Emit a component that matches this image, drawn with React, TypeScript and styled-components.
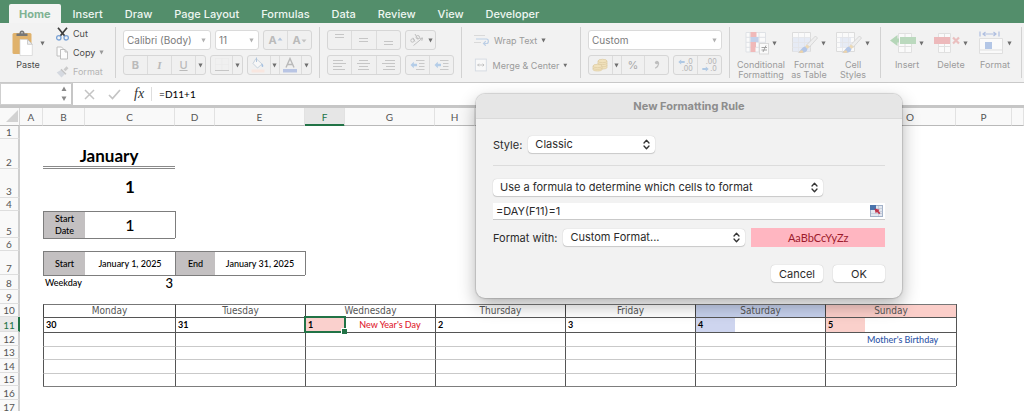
import React from "react";
import styled, { createGlobalStyle } from "styled-components";

const UI = `Inter, "Liberation Sans", sans-serif`;
const SHEET = `Lato, "Liberation Sans", sans-serif`;
const INK = "#4a4a4a";
const SOFT = "#a9a9a9";
const ACCENT = "#217346";

const GlobalStyle = createGlobalStyle`
  * { box-sizing: border-box; }
  body { margin: 0; background: #fff; font-family: ${UI}; }
  button, input, select { font: inherit; color: inherit; margin: 0; }
`;

const Shell = styled.div`
  position: relative;
  display: flex;
  flex-direction: column;
  height: 100vh;
  overflow: hidden;
`;

/* ---------- tabs ---------- */
const TabBar = styled.nav`
  display: flex;
  align-items: flex-end;
  gap: 2px;
  height: 23px;
  flex: none;
  padding-left: 9px;
  background: #538e6b;
`;

const Tab = styled.button<{ $active?: boolean }>`
  height: 19px;
  padding: 0 10px;
  border: 0;
  border-radius: 2px 2px 0 0;
  background: ${(p) => (p.$active ? "#f4f4f4" : "transparent")};
  color: ${(p) => (p.$active ? "#7fb293" : "#eef6f1")};
  font-size: 11px;
  font-weight: ${(p) => (p.$active ? 700 : 500)};
  line-height: 16px;
  white-space: nowrap;
`;

/* ---------- ribbon ---------- */
const Ribbon = styled.div`
  display: flex;
  flex: none;
  height: 60px;
  background: #f2f2f2;
  border-bottom: 1px solid #c9c9c9;
`;

const Group = styled.section<{ $pad?: number }>`
  display: flex;
  flex: none;
  margin: 4px 0;
  padding: 0 ${(p) => p.$pad ?? 7}px;
  border-right: 1px solid #d2d2d2;
`;

const Rows = styled.div<{ $width?: number }>`
  display: flex;
  flex-direction: column;
  gap: 5px;
  padding-top: 3px;
  width: ${(p) => (p.$width ? `${p.$width}px` : "auto")};
`;

const Line = styled.div`
  display: flex;
  gap: 4px;
  height: 20px;
`;

const Combo = styled.label<{ $width: number }>`
  display: grid;
  align-items: center;
  width: ${(p) => p.$width}px;
  height: 20px;
  border: 1px solid #dadada;
  border-radius: 3px;
  background: #fff;
  color: #7b7b7b;
  font-size: 10px;

  > * { grid-area: 1 / 1; }
  > svg { justify-self: end; margin-right: 4px; pointer-events: none; }
  > select {
    appearance: none;
    width: 100%;
    height: 18px;
    padding: 0 0 0 3px;
    border: 0;
    background: transparent;
    outline: none;
  }
`;

const ButtonSet = styled.div<{ $width: number }>`
  display: flex;
  width: ${(p) => p.$width}px;
  height: 20px;
  border: 1px solid #d6d6d6;
  border-radius: 3px;
  background: #f0f0f0;
`;

const ToolButton = styled.button<{ $narrow?: boolean; $last?: boolean }>`
  display: flex;
  align-items: center;
  justify-content: center;
  flex: ${(p) => (p.$narrow ? "0 0 9px" : "1 1 0")};
  min-width: 0;
  padding: 0;
  border: 0;
  border-right: ${(p) => (p.$last ? "0" : "1px solid #dcdcdc")};
  background: transparent;
  color: ${SOFT};
  font-size: 11px;
  line-height: 12px;
`;

const SmallButton = styled.button<{ $color?: string; $height?: number }>`
  display: flex;
  align-items: center;
  gap: 4px;
  height: ${(p) => p.$height ?? 20}px;
  padding: 0;
  border: 0;
  background: transparent;
  color: ${(p) => p.$color ?? INK};
  font-size: 9px;
  white-space: nowrap;
`;

const BigButton = styled.button<{ $width: number; $color?: string }>`
  display: flex;
  flex-direction: column;
  align-items: center;
  width: ${(p) => p.$width}px;
  padding: 4px 0 0;
  border: 0;
  background: transparent;
  color: ${(p) => p.$color ?? "#9b9b9b"};
  font-size: 9px;
  line-height: 10px;
  white-space: nowrap;
`;

const IconRow = styled.span<{ $gap?: number }>`
  display: flex;
  align-items: center;
  gap: ${(p) => p.$gap ?? 3}px;
  height: 24px;
  margin-bottom: 5px;
`;

const ClipboardColumn = styled.div`
  display: flex;
  flex-direction: column;
  gap: 6px;
  width: 59px;
`;

const FontGlyph = styled.span<{ $serif?: boolean; $italic?: boolean; $underline?: boolean }>`
  font-family: ${(p) => (p.$serif ? `"Liberation Serif", serif` : UI)};
  font-style: ${(p) => (p.$italic ? "italic" : "normal")};
  font-weight: ${(p) => (p.$underline ? 500 : 700)};
  text-decoration: ${(p) => (p.$underline ? "underline" : "none")};
  color: #bababa;
`;

/* ---------- formula bar ---------- */
const FormulaBar = styled.div`
  display: flex;
  flex: none;
  height: 25px;
  background: #fff;
  border-bottom: 3px solid #c6c6c6;
`;

const NameBox = styled.label`
  display: flex;
  align-items: center;
  width: 73px;
  padding-right: 4px;
  border: 1px solid #cfcfcf;
  border-right: 2px solid #c6c6c6;

  > input { flex: 1; min-width: 0; border: 0; outline: none; background: transparent; font-size: 10px; }
`;

const FormulaTools = styled.div`
  display: flex;
  align-items: center;
  gap: 13px;
  margin: 4px 0;
  padding: 0 7px 0 11px;
  border-right: 1px solid #dedede;
`;

const PlainButton = styled.button`
  display: flex;
  align-items: center;
  padding: 0;
  border: 0;
  background: transparent;
  color: #333;
  font-family: "Liberation Serif", serif;
  font-size: 14px;
  font-style: italic;
  line-height: 14px;
`;

const FormulaInput = styled.input`
  flex: 1;
  min-width: 0;
  padding: 0 7px;
  border: 0;
  outline: none;
  background: transparent;
  && { color: #000; font-family: ${SHEET}; font-size: 10px; }
`;

/* ---------- sheet ---------- */
const SheetArea = styled.main`
  flex: 1;
  min-height: 0;
  overflow: hidden;
`;

const Grid = styled.table`
  width: 100%;
  table-layout: fixed;
  border-collapse: separate;
  border-spacing: 0;
  font-family: ${SHEET};
  font-size: 10px;
  line-height: 12px;
`;

const Col = styled.col<{ $w?: number }>`
  width: ${(p) => (p.$w ? `${p.$w}px` : "auto")};
`;

const GridRow = styled.tr<{ $h: number }>`
  height: ${(p) => p.$h}px;
`;

const ColHead = styled.th<{ $active?: boolean }>`
  padding: 0;
  border-right: 1px solid #e2e2e2;
  border-bottom: 1px solid ${(p) => (p.$active ? ACCENT : "#b9b9b9")};
  box-shadow: ${(p) => (p.$active ? `inset 0 -1px ${ACCENT}` : "none")};
  background: ${(p) => (p.$active ? "#e6e6e6" : "#f9f9f9")};
  color: ${(p) => (p.$active ? ACCENT : "#555")};
  font-weight: 400;
`;

const Corner = styled.th`
  padding: 0 0 2px;
  border-right: 1px solid #d5d5d5;
  border-bottom: 1px solid #b9b9b9;
  background: #f9f9f9;
  text-align: right;
  vertical-align: bottom;
  line-height: 0;
`;

const RowHead = styled.th<{ $active?: boolean }>`
  padding: 0;
  border-right: 2px solid ${(p) => (p.$active ? ACCENT : "#cfcfcf")};
  border-bottom: 1px solid #dedede;
  background: ${(p) => (p.$active ? "#e9e9e9" : "#f9f9f9")};
  color: ${(p) => (p.$active ? ACCENT : "#555")};
  font-weight: 400;
  text-align: center;
  vertical-align: bottom;
`;

type CellProps = {
  $left?: string;
  $top?: string;
  $fill?: string;
  $color?: string;
  $align?: "left" | "center" | "right";
  $valign?: "top" | "middle" | "bottom";
  $size?: number;
  $bold?: boolean;
};

const Cell = styled.td<CellProps>`
  padding: 0 2px;
  border-left: ${(p) => (p.$left ? `1px solid ${p.$left}` : "0")};
  border-top: ${(p) => (p.$top ? `1px solid ${p.$top}` : "0")};
  background: ${(p) => p.$fill ?? "transparent"};
  color: ${(p) => p.$color ?? "#000"};
  font-size: ${(p) => p.$size ?? 9}px;
  font-weight: ${(p) => (p.$bold ? 700 : 500)};
  text-align: ${(p) => p.$align ?? "left"};
  vertical-align: ${(p) => p.$valign ?? "middle"};
  white-space: nowrap;
`;

const MonthCell = styled(Cell)`
  border-bottom: 3px double #8a8a8a;
  line-height: 20px;
`;

const NumberCell = styled(Cell)`
  line-height: 22px;
`;

const DayHead = styled.th<{ $fill?: string }>`
  padding: 0;
  border-left: 1px solid #444;
  border-top: 1px solid #777;
  background: ${(p) => p.$fill ?? "transparent"};
  color: #555;
  font-family: "DejaVu Sans Condensed", "DejaVu Sans", sans-serif;
  font-size: 10px;
  font-weight: 400;
`;

const SelectedCell = styled(Cell)`
  position: relative;

  &::after {
    content: "";
    position: absolute;
    inset: -2px -1px -1px -2px;
    border: 2px solid ${ACCENT};
  }
  &::before {
    content: "";
    position: absolute;
    right: -2px;
    bottom: -2px;
    z-index: 1;
    width: 5px;
    height: 5px;
    border-left: 1px solid #fff;
    border-top: 1px solid #fff;
    background: ${ACCENT};
  }
`;

/* ---------- dialog ---------- */
const Dialog = styled.section`
  position: absolute;
  left: 476px;
  top: 94px;
  width: 426px;
  border-radius: 9px;
  background: #f2f2f2;
  box-shadow: 0 0 1px 1px rgba(0, 0, 0, 0.14), 0 7px 18px rgba(0, 0, 0, 0.3);
  color: #2b2b2b;
  font-size: 11px;
`;

const DialogTitle = styled.h1`
  margin: 0;
  height: 25px;
  border-bottom: 1px solid #dadada;
  border-radius: 9px 9px 0 0;
  background: #e6e6e6;
  color: #8d8d8d;
  font-size: 11px;
  font-weight: 700;
  line-height: 24px;
  text-align: center;
`;

const DialogBody = styled.form`
  display: flex;
  flex-direction: column;
  padding: 17px 17px 16px;
`;

const Field = styled.div`
  display: flex;
  align-items: center;
  gap: 6px;
`;

const FieldLabel = styled.label`
  white-space: nowrap;
`;

const Divider = styled.hr`
  width: 100%;
  margin: 12px 0 13px;
  border: 0;
  border-top: 1px solid #dcdcdc;
`;

const Popup = styled.span<{ $width: number }>`
  display: grid;
  align-items: center;
  width: ${(p) => p.$width}px;
  height: 17px;
  border-radius: 4px;
  background: #fff;
  box-shadow: 0 0 1px rgba(0, 0, 0, 0.25), 0 1px 1px rgba(0, 0, 0, 0.15);

  > * { grid-area: 1 / 1; }
  > svg { justify-self: end; margin-right: 5px; pointer-events: none; }
  > select {
    appearance: none;
    width: 100%;
    height: 17px;
    padding: 0 0 1px 7px;
    border: 0;
    background: transparent;
    outline: none;
  }
`;

const RangeBox = styled.div`
  display: flex;
  align-items: center;
  height: 17px;
  margin: 7px 0 8px;
  padding: 0 2px 0 3px;
  background: #fff;
  border-bottom: 1px solid #c9c9c9;

  > input { flex: 1; min-width: 0; padding: 0; border: 0; outline: none; background: transparent; }
`;

const Sample = styled.output`
  flex: 1;
  height: 19px;
  background: #ffb6c1;
  color: #9c1a2c;
  font-family: ${SHEET};
  font-size: 11px;
  line-height: 19px;
  text-align: center;
`;

const Actions = styled.div`
  display: flex;
  justify-content: flex-end;
  gap: 10px;
  margin-top: 18px;
`;

const PushButton = styled.button`
  width: 52px;
  height: 17px;
  padding: 0;
  border: 0;
  border-radius: 4px;
  background: #fff;
  box-shadow: 0 0 1px rgba(0, 0, 0, 0.25), 0 1px 1px rgba(0, 0, 0, 0.15);
  line-height: 16px;
`;

/* ---------- drawings ---------- */
const Caret = ({ color = "#6f6f6f" }: { color?: string }) => (
  <svg width="5" height="5" viewBox="0 0 5 5" aria-hidden="true">
    <path d="M0.4 0.6h4.2L2.5 4.4z" fill={color} />
  </svg>
);

const Chevrons = () => (
  <svg width="7" height="11" viewBox="0 0 7 11" fill="none" stroke="#333" strokeWidth="1.3" strokeLinecap="round" strokeLinejoin="round" aria-hidden="true">
    <path d="M1 4l2.5-2.8L6 4M1 7l2.5 2.8L6 7" />
  </svg>
);

const PasteIcon = () => (
  <svg width="21" height="26" viewBox="0 0 21 26" aria-hidden="true">
    <rect x="0.5" y="3" width="19" height="21" rx="1.5" fill="#e0b26c" />
    <path d="M4.5 6V3.4h3C7.5 1.4 8.5 0.5 10 0.5s2.5 0.9 2.5 2.9h3V6z" fill="#777" />
    <circle cx="10" cy="2.7" r="0.8" fill="#ddd" />
    <path d="M8 9.5h7.5l4.8 4.8V25.5H8z" fill="#fff" stroke="#d2d2d2" strokeWidth="0.7" />
    <path d="M15.5 9.5v4.8h4.8z" fill="#eee" stroke="#bbb" strokeWidth="0.7" />
  </svg>
);

const CutIcon = () => (
  <svg width="13" height="14" viewBox="0 0 13 14" fill="none" aria-hidden="true">
    <path d="M2 0.7L8.8 9M11 0.7L4.2 9" stroke="#3d3d3d" strokeWidth="1.7" />
    <circle cx="2.8" cy="10.8" r="2.2" stroke="#7ba3d6" strokeWidth="1.3" />
    <circle cx="10.2" cy="10.8" r="2.2" stroke="#7ba3d6" strokeWidth="1.3" />
  </svg>
);

const CopyIcon = () => (
  <svg width="13" height="14" viewBox="0 0 13 14" fill="#fcfcfc" stroke="#b9b9b9" strokeWidth="0.9" aria-hidden="true">
    <path d="M1 1h4.500L8 3.500V10H1z" />
    <path d="M4.500 3.500H9l2.500 2.500V13h-7zM9 3.500V6h2.500" />
  </svg>
);

const FormatBrushIcon = () => (
  <svg width="13" height="14" viewBox="0 0 13 14" aria-hidden="true">
    <path d="M7.500 4.500l3-3.200 2 2-3 3z" fill="#cbcbcb" />
    <path d="M5.500 4.500L9.500 8.500 5.500 12.500 0.700 7.500z" fill="#d5d9e0" />
    <path d="M5 4.200l5 5" stroke="#c4c4c4" strokeWidth="1.3" />
  </svg>
);

const SizeGlyph = ({ up }: { up?: boolean }) => (
  <svg width="6" height="12" viewBox="0 0 6 12" aria-hidden="true">
    <path d={up ? "M0.500 6.500L3 3.500l2.500 3z" : "M0.500 5.500h5L3 8.500z"} fill={up ? "#b3c6de" : "#c3c3c3"} />
  </svg>
);

const BorderIcon = () => (
  <svg width="14" height="14" viewBox="0 0 14 14" aria-hidden="true">
    <path d="M0.500 0.500h13v12H0.500zM7 0.500v12M0.500 6.500h13" stroke="#e9e9e9" strokeWidth="0.7" fill="none" />
    <path d="M0 12.500h14" stroke="#c6c6c6" />
  </svg>
);

const FillIcon = () => (
  <svg width="15" height="16" viewBox="0 0 15 16" aria-hidden="true">
    <path d="M5 1.500L11 7l-4.500 4L2 6.500z" fill="#f7f7f7" stroke="#c2ced9" strokeWidth="0.9" />
    <path d="M5.500 0.500v4.500" stroke="#b0c5dd" />
    <path d="M11 6.500c1.800 1.500 1.500 3.500 0.500 3.500S10 8 11 6.500z" fill="#a5c1e2" />
    <rect x="0.500" y="12.500" width="13" height="3" fill="#f8e6df" />
  </svg>
);

const FontColorIcon = () => (
  <svg width="16" height="16" viewBox="0 0 16 16" fill="none" aria-hidden="true">
    <path d="M4 10.500L8 1.500l4 9M5.500 7.500h5" stroke="#b9b9b9" strokeWidth="1.4" />
    <rect x="1" y="12" width="14" height="3.500" fill="#b9c5e4" />
  </svg>
);

const LinesIcon = ({ lines }: { lines: [number, number, number][] }) => (
  <svg width="13" height="14" viewBox="0 0 13 14" stroke="#c6c6c6" strokeWidth="1" aria-hidden="true">
    {lines.map(([x1, x2, y], i) => (
      <path key={i} d={`M${x1} ${y}.5H${x2}`} />
    ))}
  </svg>
);

const OrientationIcon = () => (
  <svg width="15" height="14" viewBox="0 0 15 14" fill="none" stroke="#c0c0c0" strokeWidth="1" aria-hidden="true">
    <path d="M4.500 12.500L13.500 5M13.500 5l-3 0.500M13.500 5l-0.700 2.800" />
    <circle cx="3.500" cy="7.500" r="1.700" />
    <path d="M4 4.800l2 3.700M6 1l3 5.200" />
    <circle cx="8.800" cy="4.200" r="1.700" />
  </svg>
);

const IndentIcon = () => (
  <svg width="15" height="12" viewBox="0 0 15 12" fill="none" aria-hidden="true">
    <path d="M0.500 6L3.800 2.700v2H7v2.600H3.800v2z" fill="#b4cde8" />
    <path d="M6 1.500h8.500M9 4.500h5.500M9 7.500h5.500M6 10.500h8.500" stroke="#c9c9c9" />
  </svg>
);

const WrapIcon = () => (
  <svg width="16" height="12" viewBox="0 0 16 12" fill="none" aria-hidden="true">
    <path d="M0 1.500h11M0 8.500h7" stroke="#d9d9d9" />
    <path d="M2 5h10.500c2.500 0 2.500 4.500 0 4.500H10M11.800 7.200L9.500 9.500l2.300 2.200" stroke="#bccfe6" strokeWidth="1.2" />
  </svg>
);

const MergeIcon = () => (
  <svg width="16" height="14" viewBox="0 0 16 14" fill="none" aria-hidden="true">
    <rect x="1.500" y="0.500" width="12" height="13" fill="#f8f8f8" stroke="#d4dae2" />
    <path d="M4 7h7M5.500 5.500L4 7l1.500 1.500M9.500 5.500L11 7 9.500 8.500" stroke="#b9b9b9" strokeWidth="0.9" />
  </svg>
);

const MoneyIcon = () => (
  <svg width="16" height="14" viewBox="0 0 16 14" fill="#f1e2bd" stroke="#dccaa0" strokeWidth="0.7" aria-hidden="true">
    <path d="M6 3v6.500c0 2 9 2 9 0V3z" />
    <ellipse cx="10.500" cy="3" rx="4.500" ry="1.700" />
    <path d="M6 5.200c0 1.800 9 1.800 9 0M6 7.400c0 1.800 9 1.800 9 0" fill="none" />
    <path d="M1 8v3.500c0 2 9 2 9 0V8z" />
    <ellipse cx="5.500" cy="8" rx="4.500" ry="1.700" />
    <path d="M1 10c0 1.800 9 1.800 9 0" fill="none" />
  </svg>
);

const CommaIcon = () => (
  <svg width="6" height="10" viewBox="0 0 6 10" fill="none" aria-hidden="true">
    <circle cx="2.600" cy="2.600" r="1.700" fill="#bdbdbd" />
    <path d="M2.500 1.300c2.800 0 3 4.700-1.300 7" stroke="#bdbdbd" strokeWidth="1.3" />
  </svg>
);

const DecimalArrow = ({ right }: { right?: boolean }) => (
  <svg width="7" height="6" viewBox="0 0 7 6" aria-hidden="true">
    <path d={right ? "M6.700 3L3.800 0.500V2H0.300v2h3.500v1.500z" : "M0.300 3L3.200 0.500V2h3.500v2H3.200v1.500z"} fill="#b0c9e4" />
  </svg>
);

const CondIcon = () => (
  <svg width="24" height="24" viewBox="0 0 24 24" fill="none" aria-hidden="true">
    <path d="M1 1.500h19.500V21H1zM1 6.300h19.500M1 11.300h19.500M1 16.300h19.500M5 1.500V21M14 1.500V21" stroke="#dfe2e6" fill="#fafafa" />
    <path d="M5.500 1h6v5h-6zM5.500 16h5v5h-5z" fill="#f0b9b9" />
    <path d="M5.500 6h8v5h-8z" fill="#c3d1ea" />
    <path d="M5.500 11h5.500v5H5.500z" fill="#f0b9b9" />
    <rect x="14.500" y="12.500" width="9" height="10.500" fill="#fafafa" stroke="#d9d9d9" />
    <path d="M16.500 16.500h5.500M16.500 19h5.500M21 14.500l-3 6.500" stroke="#999" strokeWidth="0.9" />
  </svg>
);

const TableBrushIcon = ({ grid }: { grid?: boolean }) => (
  <svg width="26" height="24" viewBox="0 0 26 24" fill="none" aria-hidden="true">
    <path d="M0.500 1.500h18v19H0.500z" fill="#fafafa" stroke="#dcdcdc" />
    <path d={grid ? "M1 6.500h17v14H1z" : "M4 6h11v10H4z"} fill="#e6ebf5" />
    <path d="M0.500 6.500h18M0.500 11.500h18M0.500 16.500h18M6.500 1.500v19M12.500 1.500v19" stroke="#e3e5e9" strokeWidth="0.8" />
    <path d="M23.500 5L15 13.500l2.500 2.500 8-9z" fill="#eee" stroke="#cdcdcd" strokeWidth="0.7" />
    <path d="M15 13.500l2.500 2.500-2 2-2.500-2.500z" fill="#ecd9b5" />
    <path d="M13 15.500l2.500 2.500c-0.500 3.500-4.500 4.500-10 3.500 3-0.500 3.500-5 7.500-6z" fill="#b3c6e6" />
    <path d="M8 20c1.500-1.500 3-1 3.500 1.500-1.500 0.500-3 0.500-5 0z" fill="#ecd3ac" />
  </svg>
);

const InsertIcon = () => (
  <svg width="26" height="24" viewBox="0 0 26 24" aria-hidden="true">
    <path d="M8.500 2.500h13v19h-13zM8.500 15.500h13M15 2.500v19" fill="#fafafa" stroke="#e0e0e0" />
    <path d="M0 9.500L7.500 4v11z" fill="#b5d6b8" />
    <path d="M6 7.500h3v4H6z" fill="#b5d6b8" />
    <rect x="10" y="6" width="16" height="7" fill="#bbd9be" />
  </svg>
);

const DeleteIcon = () => (
  <svg width="26" height="24" viewBox="0 0 26 24" fill="none" aria-hidden="true">
    <path d="M4.500 2.500h12v19h-12zM4.500 15.500h12M10.500 2.500v19" fill="#fafafa" stroke="#e0e0e0" />
    <rect x="0" y="6" width="16" height="7" fill="#edb9bb" />
    <path d="M19 6.500l6 6M25 6.500l-6 6" stroke="#eabfbf" strokeWidth="2.2" />
  </svg>
);

const FormatCellsIcon = () => (
  <svg width="26" height="24" viewBox="0 0 26 24" fill="none" aria-hidden="true">
    <path d="M2 0.500v5M21 0.500v5M5 3h13M7.500 1L5 3l2.500 2M15.500 1L18 3l-2.500 2" stroke="#b0bfe0" strokeWidth="1.2" />
    <path d="M1.500 7.500h23v15h-23zM1.500 19h23" fill="#fafafa" stroke="#dfdfdf" />
    <rect x="7" y="11" width="7" height="7" fill="#b3c6e6" />
  </svg>
);

const RangeIcon = () => (
  <svg width="13" height="12" viewBox="0 0 13 12" aria-hidden="true">
    <rect x="0.500" y="0.500" width="12" height="11" fill="#e3e8f0" stroke="#a3b2c9" />
    <path d="M0 0h6v5H0z" fill="#4a74ac" />
    <path d="M6 3.500h6.500M6 6.500h6.500M1 8.500h11.500M8.500 1v10" stroke="#b5c0d2" strokeWidth="0.6" />
    <path d="M4.500 3.500l5.200 1.200-1.300 1.200 2 2.200-1.200 1.200-2.200-2.200-1.300 1.200z" fill="#c0344a" />
  </svg>
);

/* ---------- data ---------- */
const TABS = ["Home", "Insert", "Draw", "Page Layout", "Formulas", "Data", "Review", "View", "Developer"];
const COLS: [string, number?][] = [
  ["A", 23], ["B", 42], ["C", 90], ["D", 40], ["E", 90], ["F", 40], ["G", 90], ["H", 40],
  ["I", 90], ["J", 40], ["K", 90], ["L", 40], ["M", 90], ["N", 40], ["O", 91], ["P", 56], [""],
];

type Day = { name: string; date: string; head?: string; fill?: string; note?: string; selected?: boolean };
const DAYS: Day[] = [
  { name: "Monday", date: "30" },
  { name: "Tuesday", date: "31" },
  { name: "Wednesday", date: "1", fill: "#fad0cd", note: "New Year's Day", selected: true },
  { name: "Thursday", date: "2" },
  { name: "Friday", date: "3" },
  { name: "Saturday", date: "4", head: "#c5d0ec", fill: "#ced5ef" },
  { name: "Sunday", date: "5", head: "#fbcec9", fill: "#fad0cb" },
];
const BODY_ROWS: [number, number][] = [[12, 14], [13, 13], [14, 14], [15, 13]];

const DARK = "#555";
const BOX = "#7d7d7d";
const PALE = "#c9c9c9";
const GREY = "#c3c0c1";

const DecimalStack = styled.span`
  display: flex;
  flex-direction: column;
  align-items: flex-end;
  color: #b9b9b9;
  font-size: 7px;
  font-weight: 500;
  line-height: 7px;
`;

const DecimalPart = styled.span`
  display: flex;
  align-items: center;
  gap: 1px;
`;

const DecimalText = ({ left }: { left?: boolean }) =>
  left ? (
    <DecimalStack>
      <DecimalPart><DecimalArrow />.0</DecimalPart>
      <DecimalPart>.00</DecimalPart>
    </DecimalStack>
  ) : (
    <DecimalStack>
      <DecimalPart>.00</DecimalPart>
      <DecimalPart><DecimalArrow right />.0</DecimalPart>
    </DecimalStack>
  );

const HomeRibbon = () => (
  <Ribbon>
    <Group $pad={0}>
      <BigButton $width={56} $color={INK}>
        <IconRow $gap={7}><PasteIcon /><Caret /></IconRow>
        Paste
      </BigButton>
      <ClipboardColumn>
        <SmallButton $height={13}><CutIcon />Cut</SmallButton>
        <SmallButton $height={13}><CopyIcon />Copy <Caret color="#999" /></SmallButton>
        <SmallButton $height={13} $color="#b5b5b5"><FormatBrushIcon />Format</SmallButton>
      </ClipboardColumn>
    </Group>

    <Group>
      <Rows>
        <Line>
          <Combo $width={88}>
            <select aria-label="Font"><option>Calibri (Body)</option></select><Caret color="#b0b0b0" />
          </Combo>
          <Combo $width={44}>
            <select aria-label="Font size"><option>11</option></select><Caret color="#b0b0b0" />
          </Combo>
          <ButtonSet $width={49}>
            <ToolButton aria-label="Increase font size"><FontGlyph>A</FontGlyph><SizeGlyph up /></ToolButton>
            <ToolButton $last aria-label="Decrease font size"><FontGlyph>A</FontGlyph><SizeGlyph /></ToolButton>
          </ButtonSet>
        </Line>
        <Line>
          <ButtonSet $width={83}>
            <ToolButton><FontGlyph>B</FontGlyph></ToolButton>
            <ToolButton><FontGlyph $serif $italic>I</FontGlyph></ToolButton>
            <ToolButton><FontGlyph $underline>U</FontGlyph></ToolButton>
            <ToolButton $narrow $last aria-label="Underline styles"><Caret /></ToolButton>
          </ButtonSet>
          <ButtonSet $width={33}>
            <ToolButton aria-label="Borders"><BorderIcon /></ToolButton>
            <ToolButton $narrow $last aria-label="Border styles"><Caret /></ToolButton>
          </ButtonSet>
          <ButtonSet $width={65}>
            <ToolButton aria-label="Fill colour"><FillIcon /></ToolButton>
            <ToolButton $narrow aria-label="More fills"><Caret /></ToolButton>
            <ToolButton aria-label="Font colour"><FontColorIcon /></ToolButton>
            <ToolButton $narrow $last aria-label="More font colours"><Caret /></ToolButton>
          </ButtonSet>
        </Line>
      </Rows>
    </Group>

    <Group>
      <Rows>
        <Line>
          <ButtonSet $width={74}>
            <ToolButton aria-label="Top align"><LinesIcon lines={[[2, 11, 1], [2, 11, 4]]} /></ToolButton>
            <ToolButton aria-label="Middle align"><LinesIcon lines={[[2, 11, 5], [2, 11, 8]]} /></ToolButton>
            <ToolButton $last aria-label="Bottom align"><LinesIcon lines={[[2, 11, 8], [2, 11, 11]]} /></ToolButton>
          </ButtonSet>
          <ButtonSet $width={31}>
            <ToolButton $last aria-label="Orientation"><OrientationIcon /></ToolButton>
            <ToolButton $narrow $last aria-label="Orientation options"><Caret /></ToolButton>
          </ButtonSet>
        </Line>
        <Line>
          <ButtonSet $width={74}>
            <ToolButton aria-label="Align left"><LinesIcon lines={[[0, 10, 2], [0, 13, 5], [0, 9, 8], [0, 12, 11]]} /></ToolButton>
            <ToolButton aria-label="Centre"><LinesIcon lines={[[2, 11, 2], [0, 13, 5], [2, 11, 8], [1, 12, 11]]} /></ToolButton>
            <ToolButton $last aria-label="Align right"><LinesIcon lines={[[3, 13, 2], [0, 13, 5], [4, 13, 8], [1, 13, 11]]} /></ToolButton>
          </ButtonSet>
          <ButtonSet $width={49}>
            <ToolButton aria-label="Decrease indent"><IndentIcon /></ToolButton>
            <ToolButton $last aria-label="Increase indent"><IndentIcon /></ToolButton>
          </ButtonSet>
        </Line>
      </Rows>
    </Group>

    <Group $pad={12}>
      <Rows $width={94}>
        <SmallButton $color="#9b9b9b"><WrapIcon />Wrap Text <Caret /></SmallButton>
        <SmallButton $color="#9b9b9b"><MergeIcon />Merge &amp; Center <Caret /></SmallButton>
      </Rows>
    </Group>

    <Group>
      <Rows>
        <Combo $width={134}>
          <select aria-label="Number format"><option>Custom</option></select><Caret color="#b0b0b0" />
        </Combo>
        <Line>
          <ButtonSet $width={81}>
            <ToolButton aria-label="Currency"><MoneyIcon /></ToolButton>
            <ToolButton $narrow aria-label="Currency options"><Caret /></ToolButton>
            <ToolButton>%</ToolButton>
            <ToolButton $last aria-label="Comma style"><CommaIcon /></ToolButton>
          </ButtonSet>
          <ButtonSet $width={49}>
            <ToolButton aria-label="Increase decimal"><DecimalText left /></ToolButton>
            <ToolButton $last aria-label="Decrease decimal"><DecimalText /></ToolButton>
          </ButtonSet>
        </Line>
      </Rows>
    </Group>

    <Group>
      <BigButton $width={48}><IconRow><CondIcon /><Caret /></IconRow>Conditional<br />Formatting</BigButton>
      <BigButton $width={48}><IconRow><TableBrushIcon grid /><Caret /></IconRow>Format<br />as Table</BigButton>
      <BigButton $width={40}><IconRow><TableBrushIcon /><Caret /></IconRow>Cell<br />Styles</BigButton>
    </Group>

    <Group $pad={4}>
      <BigButton $width={44}><IconRow><InsertIcon /><Caret /></IconRow>Insert</BigButton>
      <BigButton $width={44}><IconRow><DeleteIcon /><Caret /></IconRow>Delete</BigButton>
      <BigButton $width={44}><IconRow><FormatCellsIcon /><Caret /></IconRow>Format</BigButton>
    </Group>
  </Ribbon>
);

const Sheet = () => (
  <Grid>
    <colgroup>
      <Col $w={20} />
      {COLS.map(([name, w], i) => <Col key={name || i} $w={w} />)}
    </colgroup>
    <thead>
      <GridRow $h={18}>
        <Corner aria-label="Select all">
          <svg width="13" height="13" viewBox="0 0 13 13" aria-hidden="true"><path d="M12 0v12H0z" fill="#d2d2d2" /></svg>
        </Corner>
        {COLS.map(([name], i) => <ColHead key={name || i} $active={name === "F"}>{name}</ColHead>)}
      </GridRow>
    </thead>
    <tbody>
      <GridRow $h={13}><RowHead>1</RowHead><Cell colSpan={17} /></GridRow>
      <GridRow $h={30}>
        <RowHead>2</RowHead><Cell />
        <MonthCell colSpan={2} $align="center" $valign="bottom" $size={17} $bold>January</MonthCell>
        <Cell colSpan={14} />
      </GridRow>
      <GridRow $h={29}>
        <RowHead>3</RowHead><Cell colSpan={2} />
        <NumberCell $align="center" $valign="bottom" $size={17} $bold>1</NumberCell>
        <Cell colSpan={14} />
      </GridRow>
      <GridRow $h={13}><RowHead>4</RowHead><Cell colSpan={17} /></GridRow>
      <GridRow $h={27}>
        <RowHead>5</RowHead><Cell />
        <Cell $left={BOX} $top={BOX} $fill={GREY} $align="center">Start<br />Date</Cell>
        <NumberCell $top={BOX} $align="center" $size={16}>1</NumberCell>
        <Cell $left={BOX} colSpan={14} />
      </GridRow>
      <GridRow $h={13}>
        <RowHead>6</RowHead><Cell /><Cell $top={BOX} colSpan={2} /><Cell colSpan={14} />
      </GridRow>
      <GridRow $h={24}>
        <RowHead>7</RowHead><Cell />
        <Cell $left={BOX} $top={BOX} $fill={GREY} $align="center">Start</Cell>
        <Cell $top={BOX} $align="center">January 1, 2025</Cell>
        <Cell $left={BOX} $top={BOX} $fill={GREY} $align="center">End</Cell>
        <Cell $top={BOX} $align="center">January 31, 2025</Cell>
        <Cell $left={BOX} colSpan={12} />
      </GridRow>
      <GridRow $h={15}>
        <RowHead>8</RowHead><Cell />
        <Cell $top={BOX}>Weekday</Cell>
        <Cell $top={BOX} $align="right" $size={13}>3</Cell>
        <Cell $top={BOX} colSpan={2} />
        <Cell colSpan={12} />
      </GridRow>
      <GridRow $h={14}><RowHead>9</RowHead><Cell colSpan={17} /></GridRow>
      <GridRow $h={13}>
        <RowHead>10</RowHead><Cell />
        {DAYS.map((d) => <DayHead key={d.name} colSpan={2} $fill={d.head}>{d.name}</DayHead>)}
        <Cell $left={DARK} colSpan={2} />
      </GridRow>
      <GridRow $h={15}>
        <RowHead $active>11</RowHead><Cell />
        {DAYS.map((d) => {
          const DateCell = d.selected ? SelectedCell : Cell;
          return (
            <React.Fragment key={d.name}>
              <DateCell $left={DARK} $top={DARK} $fill={d.fill} $bold>{d.date}</DateCell>
              <Cell $top={DARK} $align="center" $color="#e0222f">{d.note}</Cell>
            </React.Fragment>
          );
        })}
        <Cell $left={DARK} colSpan={2} />
      </GridRow>
      {BODY_ROWS.map(([n, h], r) => (
        <GridRow key={n} $h={h}>
          <RowHead>{n}</RowHead><Cell />
          {DAYS.map((d, i) => (
            <React.Fragment key={d.name}>
              <Cell $left={DARK} $top={r === 0 ? DARK : PALE} />
              <Cell $top={r === 0 ? DARK : PALE} $color="#2f56a8">{r === 0 && i === 6 ? "Mother's Birthday" : null}</Cell>
            </React.Fragment>
          ))}
          <Cell $left={DARK} colSpan={2} />
        </GridRow>
      ))}
      <GridRow $h={14}>
        <RowHead>16</RowHead><Cell /><Cell $top={BOX} colSpan={14} /><Cell colSpan={2} />
      </GridRow>
      <GridRow $h={14}><RowHead>17</RowHead><Cell colSpan={17} /></GridRow>
    </tbody>
  </Grid>
);

const RuleDialog = () => (
  <Dialog role="dialog" aria-labelledby="rule-title">
    <DialogTitle id="rule-title">New Formatting Rule</DialogTitle>
    <DialogBody>
      <Field>
        <FieldLabel htmlFor="rule-style">Style:</FieldLabel>
        <Popup $width={127}>
          <select id="rule-style"><option>Classic</option></select><Chevrons />
        </Popup>
      </Field>
      <Divider />
      <Popup $width={330}>
        <select aria-label="Rule type"><option>Use a formula to determine which cells to format</option></select><Chevrons />
      </Popup>
      <RangeBox>
        <input aria-label="Formula" defaultValue="=DAY(F11)=1" />
        <PlainButton type="button" aria-label="Pick range"><RangeIcon /></PlainButton>
      </RangeBox>
      <Field>
        <FieldLabel htmlFor="rule-format">Format with:</FieldLabel>
        <Popup $width={182}>
          <select id="rule-format"><option>Custom Format...</option></select><Chevrons />
        </Popup>
        <Sample>AaBbCcYyZz</Sample>
      </Field>
      <Actions>
        <PushButton type="button">Cancel</PushButton>
        <PushButton type="button">OK</PushButton>
      </Actions>
    </DialogBody>
  </Dialog>
);

export default function App() {
  return (
    <Shell>
      <GlobalStyle />
      <TabBar>
        {TABS.map((t, i) => <Tab key={t} $active={i === 0}>{t}</Tab>)}
      </TabBar>
      <HomeRibbon />
      <FormulaBar>
        <NameBox>
          <input aria-label="Name box" />
          <svg width="6" height="16" viewBox="0 0 6 16" fill="#8a8a8a" aria-hidden="true">
            <path d="M0.500 5L3 0.500 5.500 5zM0.500 10.500h5L3 15z" />
          </svg>
        </NameBox>
        <FormulaTools>
          <PlainButton aria-label="Cancel entry">
            <svg width="11" height="11" viewBox="0 0 11 11" stroke="#c4c4c4" strokeWidth="1.5" aria-hidden="true"><path d="M1 1l9 9M10 1l-9 9" /></svg>
          </PlainButton>
          <PlainButton aria-label="Accept entry">
            <svg width="13" height="11" viewBox="0 0 13 11" fill="none" stroke="#c4c4c4" strokeWidth="1.7" aria-hidden="true"><path d="M1 6l3.500 3.500L12 1" /></svg>
          </PlainButton>
          <PlainButton>fx</PlainButton>
        </FormulaTools>
        <FormulaInput aria-label="Formula bar" defaultValue="=D11+1" />
      </FormulaBar>
      <SheetArea><Sheet /></SheetArea>
      <RuleDialog />
    </Shell>
  );
}
